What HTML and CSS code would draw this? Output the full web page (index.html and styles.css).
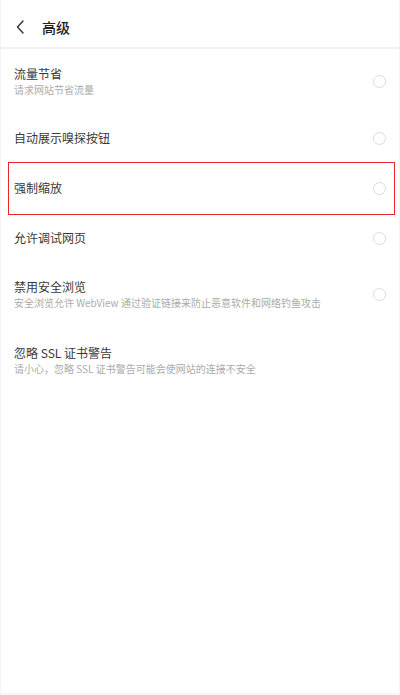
FILE: index.html
```html
<!DOCTYPE html>
<html lang="zh-CN">
<head>
<meta charset="utf-8">
<title>高级</title>
<link rel="stylesheet" href="styles.css">
</head>
<body>
<div class="screen">
  <header class="topbar">
    <span class="back">
      <svg width="8" height="14" viewBox="0 0 8 14"><path d="M7 1 L1.5 7 L7 13" fill="none" stroke="#333" stroke-width="1.4" stroke-linecap="round" stroke-linejoin="round"/></svg>
    </span>
    <h1 class="title">高级</h1>
  </header>
  <ul class="list">
    <li class="row two r1">
      <div class="text"><div class="name">流量节省</div><div class="desc">请求网站节省流量</div></div>
      <span class="radio"></span>
    </li>
    <li class="row">
      <div class="text"><div class="name">自动展示嗅探按钮</div></div>
      <span class="radio"></span>
    </li>
    <li class="row marked">
      <div class="text"><div class="name">强制缩放</div></div>
      <span class="radio"></span>
    </li>
    <li class="row">
      <div class="text"><div class="name">允许调试网页</div></div>
      <span class="radio"></span>
    </li>
    <li class="row two r5">
      <div class="text"><div class="name">禁用安全浏览</div><div class="desc">安全浏览允许 WebView 通过验证链接来防止恶意软件和网络钓鱼攻击</div></div>
      <span class="radio"></span>
    </li>
    <li class="row two r6">
      <div class="text"><div class="name">忽略 SSL 证书警告</div><div class="desc">请小心，忽略 SSL 证书警告可能会使网站的连接不安全</div></div>
    </li>
  </ul>
</div>
</body>
</html>
```

FILE: styles.css
```css
* { box-sizing: border-box; }
html, body { margin: 0; padding: 0; background: #fff; }
body {
  font-family: "Noto Sans CJK SC", "Noto Sans", Roboto, sans-serif;
  color: #333;
}
.screen {
  width: 400px;
  height: 695px;
  border-left: 1px solid #f4f4f4;
  border-right: 1px solid #f4f4f4;
  border-bottom: 2px solid #f6f6f6;
}
.topbar {
  height: 49px;
  display: flex;
  align-items: center;
  padding-left: 15px;
  padding-top: 6px;
  border-bottom: 2px solid #f0f0f0;
}
.back { display: flex; width: 26px; }
.title {
  margin: 0;
  font-size: 14px;
  font-weight: 500;
  color: #222;
  line-height: 1;
}
.list { list-style: none; margin: 0; padding: 0; }
.row {
  position: relative;
  display: flex;
  align-items: center;
  height: 50px;
  padding: 0 13px 0 13px;
}
.row.r1 { height: 64px; }
.row.r5 { height: 62px; }
.row.r6 { height: 66px; padding-top: 4px; }
.text { flex: 1; }
.name {
  font-size: 12px;
  line-height: 16px;
  color: #383838;
}
.desc {
  font-size: 10px;
  line-height: 14px;
  margin-top: 1px;
  color: #ababab;
}
.radio {
  width: 13px;
  height: 13px;
  border-radius: 50%;
  border: 1.5px solid #dcdcdc;
}
.marked::after {
  content: "";
  position: absolute;
  left: 7px;
  right: 4px;
  top: -1px;
  bottom: -2px;
  border: 1.5px solid #e8262e;
}
```
